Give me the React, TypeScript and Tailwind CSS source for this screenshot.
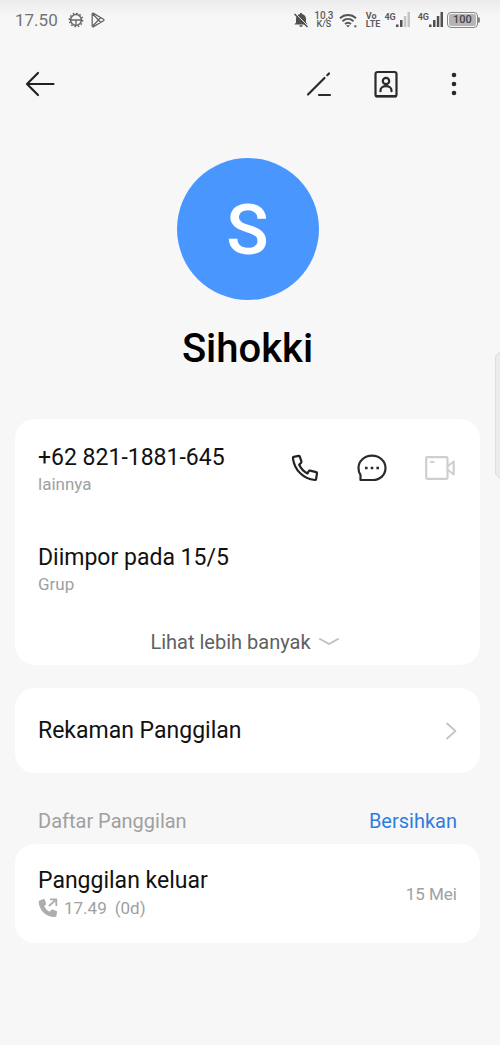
import React from 'react';

interface IconProps {
  className?: string;
}

const BackIcon: React.FC<IconProps> = ({ className }) => (
  <svg className={className} viewBox="0 0 30 26" fill="none" stroke="#222" strokeWidth="2.2" strokeLinecap="round" strokeLinejoin="round">
    <path d="M28.500 13H2M13 2 2 13l11 11" />
  </svg>
);

const EditIcon: React.FC<IconProps> = ({ className }) => (
  <svg className={className} viewBox="0 0 26 26" fill="none" stroke="#2a2a2a" strokeWidth="2.2" strokeLinecap="round">
    <path d="M2 23.5 18.500 7M21.300 4.200 23 2.500M13 24h11" />
  </svg>
);

const ContactIcon: React.FC<IconProps> = ({ className }) => (
  <svg className={className} viewBox="0 0 24 28" fill="none" stroke="#2a2a2a" strokeWidth="2.200" strokeLinecap="round">
    <rect x="1.500" y="2" width="21" height="24.500" rx="2" />
    <path d="M2 26.200h20" />
    <circle cx="12" cy="11" r="3.200" />
    <path d="M6.500 21.200v-.7a5.500 4.300 0 0 1 11 0v.7" />
  </svg>
);

const MoreIcon: React.FC<IconProps> = ({ className }) => (
  <svg className={className} viewBox="0 0 6 24" fill="#2a2a2a">
    <circle cx="3" cy="3" r="2.300" />
    <circle cx="3" cy="12" r="2.300" />
    <circle cx="3" cy="21" r="2.300" />
  </svg>
);

const PhoneIcon: React.FC<IconProps> = ({ className }) => (
  <svg className={className} viewBox="0 0 28 28" fill="none" stroke="#222" strokeWidth="2.200" strokeLinejoin="round">
    <path d="M2.700 2.800 7.600 1.900c.6-.1 1 .1 1.200.7l1.600 4.700c.2.600.1 1-.3 1.400L8.200 10.800c1.800 3.900 4.500 6.800 8.300 8.600l1.200-2.200c.3-.5.800-.7 1.400-.6l6.100 1.500c.6.100.9.500.8 1.100l-.9 5.800c-.1.700-.5 1-1.200 1C12.600 25 3.500 16.500 1.900 4.100c-.1-.7.200-1.200.8-1.300Z" />
  </svg>
);

const ChatIcon: React.FC<IconProps> = ({ className }) => (
  <svg className={className} viewBox="0 0 30 28" fill="none" stroke="#2a2a2a" strokeWidth="2.200" strokeLinejoin="round">
    <path d="M3.500 26v-5C2 19 1.500 17 1.500 14 1.500 7 7.500 1.700 15 1.700S28.500 7 28.500 14 23 26 16 26Z" />
    <path d="M8 12.700h2.600v2.600H8zM13.700 12.700h2.600v2.600h-2.600zM19.400 12.700H22v2.600h-2.600z" fill="#2a2a2a" stroke="none" />
  </svg>
);

const VideoIcon: React.FC<IconProps> = ({ className }) => (
  <svg className={className} viewBox="0 0 30 24" fill="none" stroke="#cfcfcf" strokeWidth="2.200" strokeLinecap="round" strokeLinejoin="round">
    <rect x="1.200" y="1.200" width="21.300" height="21.600" rx="1" />
    <path d="M6 6h2.500M23 10l5.700-4.500v13L23 14" />
  </svg>
);

const OutgoingIcon: React.FC<IconProps> = ({ className }) => (
  <svg className={className} viewBox="0 0 20 20">
    <path d="M1.500 2.500 5.500 1c.5-.2 1 0 1.200.5l1.400 4c.1.500 0 .9-.4 1.200L6.200 8c1 2.600 3 4.600 5.600 5.700l1.400-1.700c.3-.4.700-.5 1.200-.4l4 1.300c.5.200.7.500.6 1l-.6 4.100c-.1.600-.5 1-1.100 1C8 19.500 1 12 .7 3.700c0-.6.200-1 .8-1.200Z" fill="#adadad" />
    <path d="m11 8 7-6.500M12 1.300h6.300V8" fill="none" stroke="#adadad" strokeWidth="1.800" />
  </svg>
);

const GearIcon: React.FC<IconProps> = ({ className }) => (
  <svg className={className} viewBox="0 0 16 16" fill="none" stroke="#666">
    <circle cx="8" cy="8" r="5.400" strokeWidth="1.500" />
    <circle cx="8" cy="8" r="6.700" strokeWidth="1.300" strokeDasharray="1.700 1.800" />
    <path d="M3 8h10M8 8v5" strokeWidth="1.300" />
  </svg>
);

const PlayIcon: React.FC<IconProps> = ({ className }) => (
  <svg className={className} viewBox="0 0 14 16" fill="none" stroke="#666" strokeWidth="1.300" strokeLinejoin="round">
    <path d="M1.200 2.200v11.600c0 .8.700 1.200 1.400.8L12.500 8.800c.6-.4.600-1.200 0-1.600L2.600 1.400c-.7-.4-1.400 0-1.400.8ZM1.500 1.800 9.800 10.500M1.500 14.200 9.800 5.500" />
  </svg>
);

const MutedBellIcon: React.FC<IconProps> = ({ className }) => (
  <svg className={className} viewBox="0 0 16 16">
    <path d="M8 1c.7 0 1.100.4 1.100 1.100C11.500 2.600 13 4.500 13 7v3.500l1.500 2H1.500l1.500-2V7c0-2.500 1.500-4.400 3.900-4.900C6.900 1.400 7.300 1 8 1ZM6.300 13.200h3.400a1.700 1.700 0 0 1-3.400 0Z" fill="#4f4f4f" />
    <path d="M2.300 1.300 15 14" stroke="#f5f5f5" strokeWidth="1" />
    <path d="m1.500 2 13 13" stroke="#4f4f4f" strokeWidth="1.400" />
  </svg>
);

const WifiIcon: React.FC<IconProps> = ({ className }) => (
  <svg className={className} viewBox="0 0 18 15" fill="none" stroke="#555" strokeWidth="1.900">
    <path d="M1 5.200c4.600-4.300 11.400-4.300 16 0M3.500 8.200c3.300-3 7.700-3 11 0M6 11c1.800-1.500 4.200-1.500 6 0" />
    <path d="M7 12.200h4l-2 2.300z" fill="#555" stroke="none" />
    <circle cx="16.300" cy="13.300" r="1.200" fill="#777" stroke="none" />
  </svg>
);

interface SignalProps {
  weak?: boolean;
}

const Signal: React.FC<SignalProps> = ({ weak }) => (
  <div className="flex items-start">
    <span className="text-[9px] leading-[10px] font-bold">4G</span>
    <svg className="w-[14px] h-[16px]" viewBox="0 0 14 16" fill="#505050">
      <rect x="0" y="12.500" width="2.500" height="2.500" />
      <rect x="4" y="8" width="2.500" height="7" />
      <rect x="7.800" y="4" width="2.500" height="11" fill={weak ? '#c4c4c4' : '#505050'} />
      <rect x="11.500" y="0" width="2.500" height="15" fill={weak ? '#c4c4c4' : '#505050'} />
    </svg>
  </div>
);

const StatusBar: React.FC = () => (
  <div className="flex h-10 items-center justify-between bg-linear-to-b from-[#ebebeb] to-[#f7f7f7] to-40% pl-[15px] pr-5 text-[#5c5c5c]">
    <div className="flex items-center">
      <span className="text-[17px] leading-6 text-[#737373]">17.50</span>
      <GearIcon className="ml-[10px] w-4 h-4" />
      <PlayIcon className="ml-[7px] w-[14px] h-4" />
    </div>
    <div className="flex items-center">
      <MutedBellIcon className="w-4 h-4" />
      <div className="ml-1 flex w-[22px] flex-col items-center font-medium">
        <span className="text-[10px] leading-[9px]">10,3</span>
        <span className="text-[9px] leading-[9px]">K/S</span>
      </div>
      <WifiIcon className="ml-1 w-[18px] h-[15px]" />
      <div className="ml-[9px] flex flex-col font-bold">
        <span className="text-[9px] leading-[8px]">Vo</span>
        <span className="text-[9px] leading-[8px]">LTE</span>
      </div>
      <div className="ml-1 flex gap-2">
        <Signal weak />
        <Signal />
      </div>
      <div className="ml-1 flex items-center">
        <div className="flex h-4 w-[31px] rounded-[4px] border border-[#858585] p-px">
          <span className="flex-1 rounded-[2px] bg-[#b5b5b5] text-center text-[11px] leading-[12px] font-medium text-[#444]">100</span>
        </div>
        <div className="h-[6px] w-[2px] rounded-r-sm bg-[#858585]" />
      </div>
    </div>
  </div>
);

interface EntryProps {
  title: string;
  label: string;
}

const Entry: React.FC<EntryProps> = ({ title, label }) => (
  <div>
    <p className="text-[23px] leading-7 text-[#111]">{title}</p>
    <p className="text-[17px] leading-6 text-[#a0a0a0]">{label}</p>
  </div>
);

const App: React.FC = () => {
  return (
    <div className="relative min-h-screen overflow-hidden bg-[#f7f7f7] font-[Roboto,sans-serif] text-[#111]">
      <StatusBar />

      <header className="flex h-[88px] items-center justify-between pl-[25px] pr-[43px]">
        <button aria-label="Kembali">
          <BackIcon className="w-[30px] h-[26px]" />
        </button>
        <div className="flex items-center">
          <button aria-label="Edit">
            <EditIcon className="w-[26px] h-[26px]" />
          </button>
          <button aria-label="Kartu kontak" className="ml-[42px]">
            <ContactIcon className="w-6 h-7" />
          </button>
          <button aria-label="Lainnya" className="ml-[53px]">
            <MoreIcon className="w-[6px] h-6" />
          </button>
        </div>
      </header>

      <main className="pl-[15px] pr-5">
        <section className="flex flex-col items-center pt-[30px]">
          <div className="flex h-[142px] w-[142px] items-center justify-center rounded-full bg-[#4a96ff] pt-[2px] text-[70px] leading-none font-medium text-white">
            S
          </div>
          <h1 className="mt-[25px] text-[40px] leading-[48px] font-medium text-black">Sihokki</h1>
        </section>

        <section className="mt-[46px] rounded-[20px] bg-white px-[23px] pt-[25px] pb-[11px]">
          <div className="flex items-start justify-between">
            <Entry title="+62 821-1881-645" label="lainnya" />
            <div className="flex h-12 items-center gap-[38px] pr-[2px]">
              <button aria-label="Telepon">
                <PhoneIcon className="w-7 h-7" />
              </button>
              <button aria-label="Pesan">
                <ChatIcon className="w-[30px] h-7" />
              </button>
              <button aria-label="Panggilan video" disabled>
                <VideoIcon className="w-[30px] h-6" />
              </button>
            </div>
          </div>
          <div className="mt-12">
            <Entry title="Diimpor pada 15/5" label="Grup" />
          </div>
          <button className="mx-auto mt-[34px] flex items-center gap-2 pr-[6px] text-xl leading-6 text-[#606060]">
            Lihat lebih banyak
            <svg className="w-5 h-2" viewBox="0 0 20 8" fill="none" stroke="#c0c0c0" strokeWidth="2" strokeLinecap="round" strokeLinejoin="round">
              <path d="m1 1 9 5 9-5" />
            </svg>
          </button>
        </section>

        <button className="mt-[23px] flex h-[85px] w-full items-center justify-between rounded-[20px] bg-white px-[23px] text-[23px] leading-7">
          Rekaman Panggilan
          <svg className="w-3 h-[18px]" viewBox="0 0 12 18" fill="none" stroke="#c4c4c4" strokeWidth="1.800" strokeLinecap="round" strokeLinejoin="round">
            <path d="m2 1.500 8.500 7.500L2 16.500" />
          </svg>
        </button>

        <div className="mt-9 flex items-center justify-between px-[23px] text-xl leading-6">
          <h2 className="text-[#a0a0a0]">Daftar Panggilan</h2>
          <button className="text-[#2f7de1]">Bersihkan</button>
        </div>

        <section className="mt-[11px] flex h-[99px] items-center justify-between rounded-[20px] bg-white px-[23px]">
          <div>
            <p className="text-[23px] leading-7">Panggilan keluar</p>
            <div className="flex items-center pt-px text-[17px] leading-6 text-[#a0a0a0]">
              <OutgoingIcon className="w-5 h-5" />
              <span className="ml-[6px]">17.49</span>
              <span className="ml-2">(0d)</span>
            </div>
          </div>
          <time className="text-[17px] leading-6 text-[#a0a0a0]">15 Mei</time>
        </section>
      </main>

      {/* edge panel handle */}
      <div className="absolute top-[352px] -right-2 h-[126px] w-[13px] rounded-md border border-[#dedede] bg-[#ececec]" />
    </div>
  );
};

export default App;
